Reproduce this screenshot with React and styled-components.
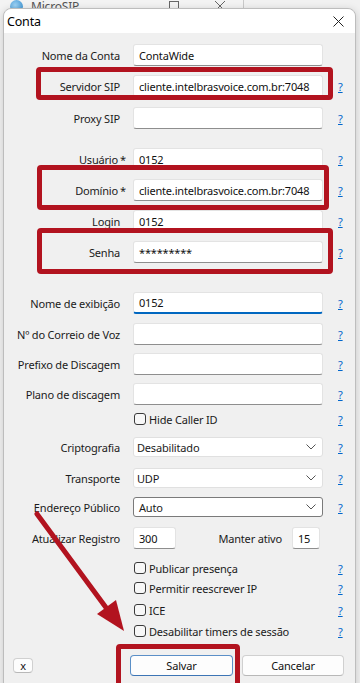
import React from 'react';
import styled, { createGlobalStyle, css } from 'styled-components';

const Global = createGlobalStyle`
  html, body { margin: 0; padding: 0; }
  body { background: #f0f0f0; font-family: "Noto Sans", "Open Sans", sans-serif; color: #1b1b1b; letter-spacing: -0.18px; }
`;

const RED = '#b2131f';

const Desktop = styled.div`
  position: relative;
  width: 360px;
  height: 683px;
  overflow: hidden;
  background: #f1f1f1;
`;

const BackWindow = styled.div`
  position: absolute;
  left: -2px;
  top: -9px;
  width: 245px;
  height: 720px;
  background: #f3f3f3;
  border-right: 1px solid #c9c9c9;
  display: flex;
  flex-direction: column;
`;

const BackTitle = styled.div`
  height: 30px;
  display: flex;
  align-items: center;
  padding-left: 12px;
  font-size: 12px;
  color: #555;
  gap: 8px;
`;

const BackIcon = styled.div`
  width: 13px;
  height: 13px;
  border-radius: 50%;
  background: radial-gradient(circle at 40% 40%, #9fd3f5, #2a86c9);
`;

const BackControls = styled.div`
  margin-left: auto;
  display: flex;
  gap: 36px;
  padding-right: 18px;
  align-items: center;
  color: #666;
`;

const Dialog = styled.div`
  position: absolute;
  left: 3px;
  top: 8px;
  width: 351px;
  height: 700px;
  background: #f0f0f0;
  border: 1px solid #bdbdbd;
  border-radius: 8px 8px 0 0;
  box-shadow: 0 2px 8px rgba(0, 0, 0, 0.18);
  display: flex;
  flex-direction: column;
`;

const TitleBar = styled.div`
  height: 24px;
  background: #ffffff;
  border-radius: 8px 8px 0 0;
  display: flex;
  align-items: center;
  padding: 0 0 0 3px;
  font-size: 12.5px;
  color: #000;
`;

const CloseBtn = styled.div`
  margin-left: auto;
  width: 24px;
  height: 24px;
  display: flex;
  align-items: center;
  justify-content: center;
  margin-right: 5px;
`;

const Body = styled.div`
  padding-top: 11px;
  display: flex;
  flex-direction: column;
`;

const Row = styled.div`
  position: relative;
  display: grid;
  grid-template-columns: 116px 190px 1fr;
  column-gap: 13px;
  align-items: center;
  height: ${p => p.$h || 22}px;
  margin-top: ${p => p.$mt || 0}px;
  ${p => p.$box && css`
    &::after {
      content: '';
      position: absolute;
      top: ${p.$box[0]}px;
      right: ${p.$box[1]}px;
      bottom: ${p.$box[2]}px;
      left: ${p.$box[3]}px;
      border: 5px solid ${RED};
      border-radius: 4px;
      pointer-events: none;
    }
  `}
`;

const Label = styled.div`
  text-align: right;
  font-size: 11px;
  white-space: nowrap;
`;

const Req = styled.span`
  display: inline-block;
  width: 0;
  margin-left: 2px;
  overflow: visible;
`;

const Input = styled.div`
  box-sizing: border-box;
  height: 22px;
  width: ${p => p.$w ? `${p.$w}px` : '100%'};
  background: #fff;
  border: 1px solid #e3e3e3;
  border-bottom: ${p => p.$focus ? '2px solid #0067c0' : '1px solid #8e8e8e'};
  border-radius: 3px;
  padding-left: 5px;
  display: flex;
  align-items: center;
  font-size: 11px;
  color: #111;
  white-space: nowrap;
  overflow: hidden;
`;

const Select = styled.div`
  box-sizing: border-box;
  height: 20px;
  background: #fff;
  border: 1px solid ${p => p.$hover ? '#7a7a7a' : '#e0e0e0'};
  border-radius: 3px;
  padding: 0 6px 0 ${p => p.$hover ? 5 : 3}px;
  display: flex;
  align-items: center;
  font-size: 11px;
`;

const ChevronBox = styled.span`
  margin-left: auto;
  display: flex;
  padding: 6px 0;
`;

const Help = styled.span`
  color: #0066cc;
  text-decoration: underline;
  font-size: 11px;
  padding-left: 2px;
`;

const Check = styled.label`
  display: flex;
  align-items: center;
  gap: 3px;
  padding-left: 1px;
  font-size: 11px;
  white-space: nowrap;
`;

const Box = styled.span`
  box-sizing: border-box;
  width: 12px;
  height: 12px;
  border: 1px solid #3a3a3a;
  border-radius: 3px;
  background: #f7f7f7;
`;

const Pair = styled.div`
  display: flex;
  align-items: center;
  justify-content: space-between;
  padding-right: 3px;
`;

const Inline = styled.div`
  display: flex;
  align-items: center;
  gap: 10px;
  font-size: 11px;
`;

const ButtonRow = styled.div`
  display: flex;
  align-items: center;
  margin-top: 14px;
  padding-left: 9px;
`;

const Button = styled.div`
  position: relative;
  box-sizing: border-box;
  width: ${p => p.$w}px;
  height: ${p => p.$hgt || 21}px;
  background: #fdfdfd;
  border: 1px solid ${p => p.$primary ? '#5b8fc7' : '#d0d0d0'};
  border-bottom-color: ${p => p.$primary ? '#3d75b5' : '#b8b8b8'};
  border-radius: 4px;
  display: flex;
  align-items: center;
  justify-content: center;
  font-size: 11px;
  color: #111;
  ${p => p.$box && css`
    &::after {
      content: '';
      position: absolute;
      top: -12px;
      left: -15px;
      right: -8px;
      bottom: -14px;
      border: 5px solid ${RED};
      border-radius: 4px;
    }
  `}
`;

const Actions = styled.div`
  display: flex;
  gap: 9px;
  margin-left: 97px;
`;

const Arrow = styled.svg`
  position: absolute;
  left: 0;
  top: 0;
  pointer-events: none;
`;

const chevron = (
  <svg width="10" height="6" viewBox="0 0 10 6">
    <path d="M0.5 0.5 L5 5 L9.5 0.5" fill="none" stroke="#555" strokeWidth="1" />
  </svg>
);

function Field({ label, req, value, focus, box, mt, help = true }) {
  return (
    <Row $mt={mt} $box={box}>
      <Label>{label}{req && <Req>*</Req>}</Label>
      <Input $focus={focus}>{value}</Input>
      {help ? <Help>?</Help> : <span />}
    </Row>
  );
}

function Combo({ label, value, hover, mt }) {
  return (
    <Row $mt={mt} $h={20}>
      <Label>{label}</Label>
      <Select $hover={hover}>
        {value}
        <ChevronBox>{chevron}</ChevronBox>
      </Select>
      <Help>?</Help>
    </Row>
  );
}

function CheckRow({ text, mt }) {
  return (
    <Row $mt={mt} $h={20}>
      <span />
      <Check><Box />{text}</Check>
      <Help>?</Help>
    </Row>
  );
}

export default function App() {
  return (
    <Desktop>
      <Global />
      <BackWindow>
        <BackTitle>
          <BackIcon />
          MicroSIP
          <BackControls>
            <svg width="10" height="10"><rect x="0.5" y="0.5" width="9" height="9" fill="none" stroke="#666" /></svg>
            <svg width="10" height="10"><path d="M0 0 L10 10 M10 0 L0 10" stroke="#666" /></svg>
          </BackControls>
        </BackTitle>
      </BackWindow>

      <Dialog>
        <TitleBar>
          Conta
          <CloseBtn>
            <svg width="11" height="11" viewBox="0 0 11 11">
              <path d="M0.5 0.5 L10.5 10.5 M10.5 0.5 L0.5 10.5" stroke="#222" strokeWidth="1" />
            </svg>
          </CloseBtn>
        </TitleBar>
        <Body>
          <Field label="Nome da Conta" value="ContaWide" help={false} />
          <Field label="Servidor SIP" value="cliente.intelbrasvoice.com.br:7048" mt={9} box={[-8, 22, -3, 32]} />
          <Field label="Proxy SIP" value="" mt={10} />

          <Field label="Usuário" req value="0152" mt={19} />
          <Field label="Domínio" req value="cliente.intelbrasvoice.com.br:7048" mt={9} box={[-14, 26, -9, 33]} />
          <Field label="Login" value="0152" mt={9} />
          <Field label="Senha" value="*********" mt={9} box={[-13, 22, -11, 33]} />

          <Field label="Nome de exibição" value="0152" focus mt={29} />
          <Field label="Nº do Correio de Voz" value="" mt={9} />
          <Field label="Prefixo de Discagem" value="" mt={8} />
          <Field label="Plano de discagem" value="" mt={8} />

          <CheckRow text="Hide Caller ID" mt={4} />

          <Combo label="Criptografia" value="Desabilitado" mt={8} />
          <Combo label="Transporte" value="UDP" mt={11} />
          <Combo label="Endereço Público" value="Auto" hover mt={9} />

          <Row $mt={10}>
            <Label>Atualizar Registro</Label>
            <Pair>
              <Input $w={43}>300</Input>
              <Inline>
                Manter ativo
                <Input $w={28}>15</Input>
              </Inline>
            </Pair>
            <span />
          </Row>

          <CheckRow text="Publicar presença" mt={9} />
          <CheckRow text="Permitir reescrever IP" mt={0} />
          <CheckRow text="ICE" mt={2} />
          <CheckRow text="Desabilitar timers de sessão" mt={1} />

          <ButtonRow>
            <Button $w={20} $hgt={15}>x</Button>
            <Actions>
              <Button $w={103} $primary $box>Salvar</Button>
              <Button $w={102}>Cancelar</Button>
            </Actions>
          </ButtonRow>
        </Body>
      </Dialog>

      <Arrow width="360" height="683" viewBox="0 0 360 683">
        <line x1="37" y1="514" x2="110" y2="613" stroke={RED} strokeWidth="5" strokeLinecap="round" />
        <polygon points="124,631 116,600 97,614" fill={RED} />
      </Arrow>
    </Desktop>
  );
}
